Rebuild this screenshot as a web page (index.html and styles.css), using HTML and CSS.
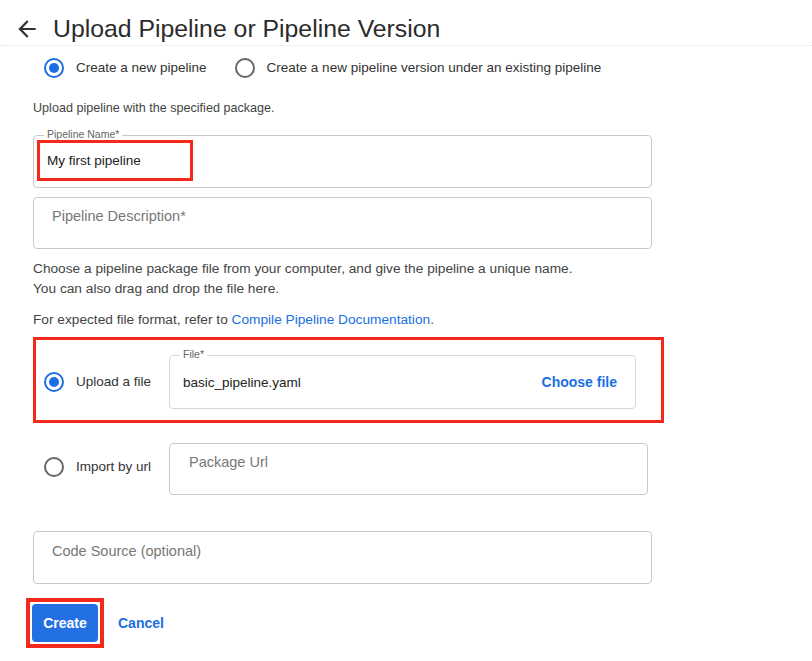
FILE: index.html
```html
<!DOCTYPE html>
<html lang="en">
<head>
<meta charset="utf-8">
<title>Upload Pipeline or Pipeline Version</title>
<link rel="stylesheet" href="styles.css">
</head>
<body>
<header class="header">
  <span class="back" aria-label="Back">
    <svg viewBox="0 0 24 24" width="26" height="26"><path d="M20 11H7.83l5.59-5.59L12 4l-8 8 8 8 1.41-1.41L7.83 13H20v-2z" fill="#333"/></svg>
  </span>
  <h1 class="title">Upload Pipeline or Pipeline Version</h1>
</header>

<main class="form">
  <div class="mode-row">
    <label class="radio"><span class="dot checked"></span><span>Create a new pipeline</span></label>
    <label class="radio"><span class="dot"></span><span>Create a new pipeline version under an existing pipeline</span></label>
  </div>

  <p class="hint">Upload pipeline with the specified package.</p>

  <div class="field field-name">
    <span class="field-label">Pipeline Name*</span>
    <span class="mark name-mark">My first pipeline</span>
  </div>

  <div class="field field-desc">
    <span class="placeholder">Pipeline Description*</span>
  </div>

  <p class="text text-choose">Choose a pipeline package file from your computer, and give the pipeline a unique name.<br>You can also drag and drop the file here.</p>
  <p class="text text-format">For expected file format, refer to <a class="link" href="#">Compile Pipeline Documentation</a>.</p>

  <div class="source-row upload-row">
    <label class="radio radio-opt"><span class="dot checked"></span><span>Upload a file</span></label>
    <div class="field field-file">
      <span class="field-label">File*</span>
      <span class="value">basic_pipeline.yaml</span>
      <span class="choose">Choose file</span>
    </div>
  </div>

  <div class="source-row url-row">
    <label class="radio radio-opt"><span class="dot"></span><span>Import by url</span></label>
    <div class="field field-url">
      <span class="placeholder">Package Url</span>
    </div>
  </div>

  <div class="field field-code">
    <span class="placeholder">Code Source (optional)</span>
  </div>

  <div class="actions">
    <span class="create-mark"><button class="btn-create">Create</button></span>
    <a class="btn-cancel" href="#">Cancel</a>
  </div>
</main>
</body>
</html>
```

FILE: styles.css
```css
* { box-sizing: border-box; }

body {
  margin: 0;
  background: #fff;
  font-family: "Liberation Sans", Arial, Helvetica, sans-serif;
  color: #333;
}

.header {
  height: 46px;
  display: flex;
  align-items: center;
  padding: 12px 0 0 14px;
  border-bottom: 1px dotted #e4e4e4;
}

.back {
  display: flex;
  width: 26px;
  height: 26px;
}

.title {
  margin: 0 0 0 13px;
  font-size: 24.8px;
  font-weight: 400;
  line-height: 32px;
  color: #2b2b2b;
}

.form {
  padding-left: 33px;
  width: 700px;
}

.mode-row {
  display: flex;
  align-items: center;
  gap: 28px;
  margin-top: 12px;
  padding-left: 11px;
  height: 20px;
}

.radio {
  display: flex;
  align-items: center;
  gap: 12px;
  font-size: 13.5px;
  line-height: 20px;
  color: #333;
}

.dot {
  width: 20px;
  height: 20px;
  border-radius: 50%;
  border: 2px solid #666;
  display: flex;
  align-items: center;
  justify-content: center;
  flex: none;
}

.dot.checked {
  border-color: #1a6fe3;
}

.dot.checked::after {
  content: "";
  width: 10px;
  height: 10px;
  border-radius: 50%;
  background: #1a6fe3;
}

.hint {
  margin: 22px 0 0;
  font-size: 12.6px;
  line-height: 16px;
  color: #444;
}

.field {
  position: relative;
  border: 1px solid #c9c9c9;
  border-radius: 4px;
  background: #fff;
}

.field-label {
  position: absolute;
  top: -8px;
  left: 10px;
  padding: 0 3px;
  background: #fff;
  font-size: 10.5px;
  line-height: 12px;
  color: #666;
}

.placeholder {
  font-size: 14.5px;
  line-height: 18px;
  color: #777;
}

.field-name {
  margin-top: 19px;
  width: 619px;
  height: 53px;
  padding: 4px 0 0 3px;
}

.mark {
  display: flex;
  align-items: center;
  border: 3px solid #f2291b;
}

.name-mark {
  width: 156px;
  height: 41px;
  padding-left: 7px;
  font-size: 13.5px;
  color: #222;
}

.field-desc {
  margin-top: 9px;
  width: 619px;
  height: 52px;
  padding: 9px 0 0 18px;
}

.text {
  font-size: 13.7px;
  line-height: 20px;
  color: #444;
}

.text-choose { margin: 10px 0 0; }
.text-format { margin: 11px 0 0; }

.link {
  color: #1a6fe3;
  text-decoration: none;
}

.source-row {
  display: flex;
  align-items: center;
}

.radio-opt {
  width: 125px;
  flex: none;
  gap: 12px;
}

.upload-row {
  margin-top: 7px;
  width: 631px;
  height: 86px;
  border: 3px solid #f2291b;
  padding: 4px 0 0 8px;
}

.field-file {
  width: 467px;
  height: 54px;
  display: flex;
  align-items: center;
  justify-content: space-between;
  padding: 0 18px 0 13px;
  border-color: #d6d6d6;
}

.value {
  font-size: 13.5px;
  color: #222;
}

.choose {
  font-size: 14px;
  font-weight: 700;
  color: #1a6fe3;
}

.url-row {
  margin-top: 20px;
  padding-left: 11px;
  height: 52px;
}

.url-row .radio-opt {
  margin-top: -4px;
}

.field-url {
  width: 479px;
  height: 52px;
  padding: 9px 0 0 19px;
}

.field-code {
  margin-top: 36px;
  width: 619px;
  height: 53px;
  padding: 10px 0 0 18px;
}

.actions {
  display: flex;
  align-items: center;
  gap: 14px;
  margin: 14px 0 0 -7px;
}

.create-mark {
  display: flex;
  border: 4px solid #f2291b;
  padding: 2px;
}

.btn-create {
  width: 66px;
  height: 38px;
  border: none;
  border-radius: 4px;
  background: #2370e2;
  color: #fff;
  font-family: inherit;
  font-size: 14px;
  font-weight: 700;
  padding: 0;
}

.btn-cancel {
  font-size: 14px;
  font-weight: 700;
  color: #1a6fe3;
  text-decoration: none;
}
```
